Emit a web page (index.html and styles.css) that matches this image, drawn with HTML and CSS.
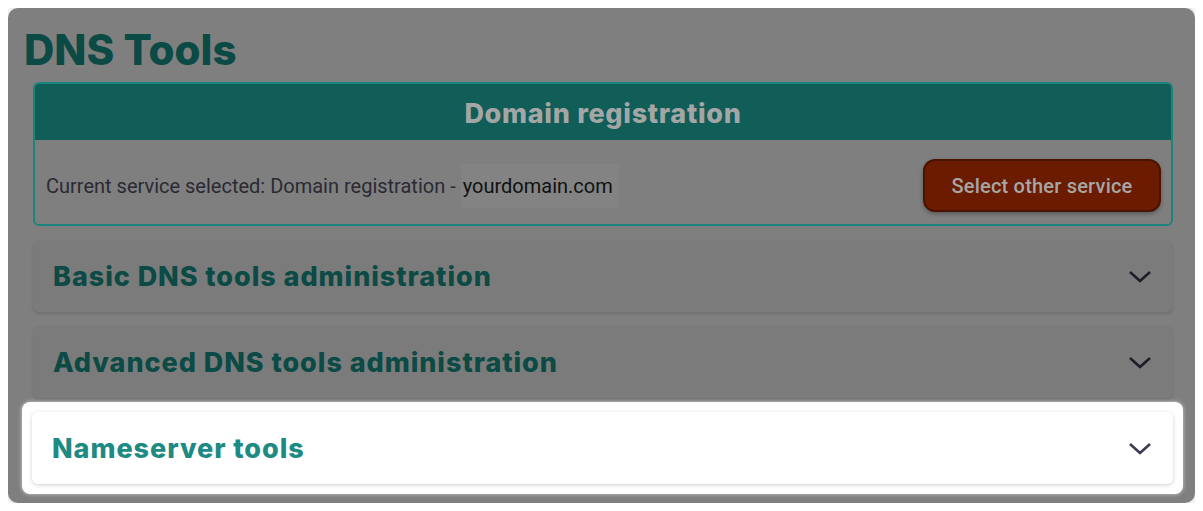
FILE: index.html
```html
<!DOCTYPE html>
<html lang="en">
<head>
    <meta charset="UTF-8">
    <meta name="viewport" content="width=device-width, initial-scale=1.0">
    <title>DNS Tools</title>
    <link rel="stylesheet" href="styles.css">
</head>
<body>
<div class="panel">
    <h1 class="page-title">DNS Tools</h1>
    <div class="modules">
        <div class="service-card">
            <div class="service-head">Domain registration</div>
            <div class="service-body">
                <p class="service-text">Current service selected: Domain registration - <span class="domain">yourdomain.com</span></p>
                <button class="btn-other">Select other service</button>
            </div>
        </div>

        <div class="acc-item">
            <span class="acc-title">Basic DNS tools administration</span>
            <svg class="chevron" viewBox="0 0 24 14"><path d="M2 2 L12 11 L22 2"/></svg>
        </div>
        <div class="acc-item">
            <span class="acc-title">Advanced DNS tools administration</span>
            <svg class="chevron" viewBox="0 0 24 14"><path d="M2 2 L12 11 L22 2"/></svg>
        </div>

        <!-- tour step: this one is highlighted -->
        <div class="spotlight">
            <div class="acc-item active">
                <span class="acc-title">Nameserver tools</span>
                <svg class="chevron" viewBox="0 0 24 14"><path d="M2 2 L12 11 L22 2"/></svg>
            </div>
        </div>
    </div>
</div>
</body>
</html>
```

FILE: styles.css
```css
body {
    margin: 8px;
    background: #ffffff;
    font-family: Roboto, "Liberation Sans", sans-serif;
}

/* dimmed page behind the tour */
.panel {
    background-color: #7f7f7f;
    border-radius: 10px;
    height: 495px;
    box-sizing: border-box;
    padding: 16px 22px 0 16px;
    box-shadow: 0 0 6px rgba(0, 0, 0, 0.25);
}

.page-title {
    margin: 0 0 6px 0;
    font-family: Inter, "Open Sans", sans-serif;
    font-weight: 800;
    font-size: 42px;
    line-height: 52px;
    color: #0b4a45;
}

.modules {
    display: flex;
    flex-direction: column;
    gap: 14px;
    margin-left: 9px;
}

.service-card {
    border: 2px solid #1b847d;
    border-radius: 6px;
    overflow: hidden;
}

.service-head {
    background-color: #115d58;
    height: 56px;
    box-sizing: border-box;
    padding-top: 3px;
    display: flex;
    align-items: center;
    justify-content: center;
    font-family: Inter, "Open Sans", sans-serif;
    font-weight: 800;
    font-size: 27px;
    letter-spacing: 0.7px;
    color: #a3a6a5;
}

.service-body {
    height: 84px;
    box-sizing: border-box;
    padding: 7px 10px 0 11px;
    display: flex;
    align-items: center;
    justify-content: space-between;
}

.service-text {
    margin: 0;
    font-size: 20px;
    color: #2a2a33;
}

.domain {
    color: #111111;
    background-color: #838383;
    padding: 10px 6px 10px 2px;
}

.btn-other {
    width: 238px;
    height: 53px;
    background-color: #6b1b00;
    border: 2px solid #4c1200;
    border-radius: 12px;
    color: #a6a6a6;
    font-family: Roboto, "Liberation Sans", sans-serif;
    font-weight: 500;
    font-size: 20px;
    letter-spacing: 0.2px;
    box-shadow: 0 2px 4px rgba(0, 0, 0, 0.3);
}

.acc-item {
    height: 72px;
    box-sizing: border-box;
    display: flex;
    align-items: center;
    justify-content: space-between;
    padding: 1px 21px 0 20px;
    background-color: #7b7b7b;
    border-radius: 6px;
    box-shadow: 0 2px 3px rgba(0, 0, 0, 0.12);
}

.acc-title {
    font-family: Inter, "Open Sans", sans-serif;
    font-weight: 800;
    font-size: 27px;
    letter-spacing: 0.95px;
    color: #0b4a45;
}

.chevron {
    width: 24px;
    height: 14px;
    fill: none;
    stroke: #1e1e2a;
    stroke-width: 2.5;
}

/* white frame round the highlighted step, outside the flow */
.spotlight {
    background: #ffffff;
    border-radius: 8px;
    padding: 10px;
    margin: -10px -10px -10px -11px;
    box-shadow: 0 0 4px rgba(255, 255, 255, 0.6);
}

.acc-item.active {
    background-color: #ffffff;
    box-shadow: 0 1px 4px rgba(0, 0, 0, 0.18);
}

.acc-item.active .acc-title {
    color: #1e8a84;
}

.acc-item.active .chevron {
    stroke: #3b3b55;
}
```
